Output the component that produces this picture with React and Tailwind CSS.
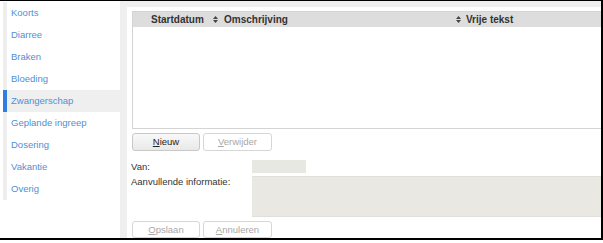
import React from 'react';

const items = ['Koorts', 'Diarree', 'Braken', 'Bloeding', 'Zwangerschap', 'Geplande ingreep', 'Dosering', 'Vakantie', 'Overig'];

const SortIcon = () => (
  <svg width="5" height="7" viewBox="0 0 5 7" className="shrink-0">
    <path d="M0 3 L2.5 0 L5 3 Z M0 4 L2.5 7 L5 4 Z" fill="#444" />
  </svg>
);

const Btn = ({ label, disabled, className = '' }) => (
  <button
    className={`rounded-[3px] border text-[9.5px] leading-none flex items-center justify-center ${
      disabled ? 'border-[#d6d6d6] bg-white text-[#a8a8a8]' : 'border-[#c8c8c8] bg-gradient-to-b from-[#f8f8f8] to-[#e9e9e9] text-[#222]'
    } ${className}`}
  >
    <span>
      <span className="underline">{label[0]}</span>
      {label.slice(1)}
    </span>
  </button>
);

export default function App() {
  return (
    <div className="w-[603px] h-[240px] border-t border-r-2 border-b-2 border-black bg-white flex font-['Liberation_Sans',Arial,sans-serif]">
      <div className="w-[120px] shrink-0 pl-[3px] pt-[1px]">
        {items.map((it) => {
          const active = it === 'Zwangerschap';
          return (
            <div
              key={it}
              className={`h-[22px] flex items-center pl-[4px] border-l-4 text-[9.5px] text-[#4f8fd6] ${
                active ? 'border-[#2f7ee0] bg-[#efefef]' : 'border-[#eeeeee]'
              }`}
            >
              {it}
            </div>
          );
        })}
      </div>

      <div className="flex-1 bg-[#efefef] pl-[7px] pt-[6px] flex">
        <div className="flex-1 bg-white pt-[4px] flex flex-col">
          <div className="ml-[5px] h-[119px] border border-r-0 border-[#d4d4d4]">
            <div className="h-[15px] bg-[#dddddd] flex items-center text-[10px] font-bold text-[#333]">
              <div className="w-[77px] pl-[18px]">Startdatum</div>
              <div className="w-[243px] pl-[3px] flex items-center">
                <SortIcon />
                <span className="ml-[6px]">Omschrijving</span>
              </div>
              <div className="pl-[3px] flex items-center">
                <SortIcon />
                <span className="ml-[5px]">Vrije tekst</span>
              </div>
            </div>
          </div>

          <div className="ml-[5px] mt-[4px] flex gap-[3px]">
            <Btn label="Nieuw" className="w-[68px] h-[18px]" />
            <Btn label="Verwijder" disabled className="w-[69px] h-[18px]" />
          </div>

          <div className="ml-[4px] mt-[9px] flex items-center text-[9.5px] text-[#333]">
            <span className="w-[121px]">Van:</span>
            <div className="w-[54px] h-[13px] bg-[#e8e8e2]" />
          </div>

          <div className="ml-[4px] mt-[2px] flex text-[9.5px] text-[#333]">
            <span className="w-[121px] leading-[12px]">Aanvullende informatie:</span>
            <div className="flex-1 h-[41px] bg-[#e9e8e2] border-y border-[#e0e0da]" />
          </div>

          <div className="ml-[5px] mt-[4px] flex gap-[3px]">
            <Btn label="Opslaan" disabled className="w-[68px] h-[17px]" />
            <Btn label="Annuleren" disabled className="w-[69px] h-[17px]" />
          </div>
        </div>
      </div>
    </div>
  );
}
